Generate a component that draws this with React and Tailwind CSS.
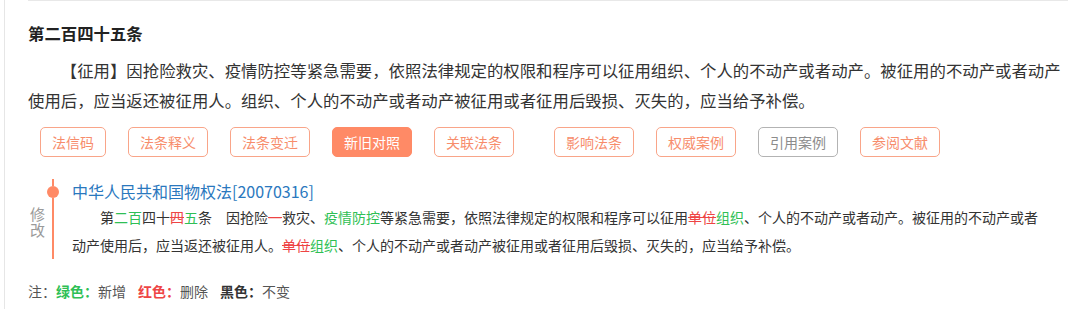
import React from 'react';

const font = { fontFamily: '"Noto Sans CJK SC", "Noto Sans", sans-serif' };

const tabs = [
  { label: '法信码' },
  { label: '法条释义' },
  { label: '法条变迁' },
  { label: '新旧对照', active: true },
  { label: '关联法条' },
  { label: '影响法条', wide: true },
  { label: '权威案例' },
  { label: '引用案例', muted: true },
  { label: '参阅文献' },
];

function Tab({ label, active, muted, wide }) {
  let cls = 'border-[#f9a589] text-[#f78d6c] bg-white';
  if (active) cls = 'border-[#ff8a66] bg-[#ff8a66] text-white';
  if (muted) cls = 'border-[#b3b3b3] text-[#8c8c8c] bg-white';
  return (
    <div
      className={`h-[30px] px-[11px] flex items-center border rounded-[5px] text-[14px] leading-none ${cls} ${
        wide ? 'ml-[18px]' : ''
      }`}
    >
      {label}
    </div>
  );
}

const G = ({ children }) => <span className="text-[#2fbf55]">{children}</span>;
const R = ({ children }) => (
  <span className="text-[#ee4444] line-through decoration-[#ee4444]">{children}</span>
);

export default function App() {
  return (
    <div className="bg-white w-[1080px] h-[309px] overflow-hidden text-[#333]" style={font}>
      <div className="ml-[4px] border-l border-[#e6e6e6] h-full pl-[23px] pr-[12px]">
        <div className="border-t border-[#e8e8e8] pt-[20px]">
          <h2 className="text-[16.4px] leading-[24px] font-bold text-[#222]">第二百四十五条</h2>
          <p className="mt-[10px] text-[16.4px] leading-[30px] indent-[2em] text-[#333]">
            【征用】因抢险救灾、疫情防控等紧急需要，依照法律规定的权限和程序可以征用组织、个人的不动产或者动产。被征用的不动产或者动产使用后，应当返还被征用人。组织、个人的不动产或者动产被征用或者征用后毁损、灭失的，应当给予补偿。
          </p>

          <div className="mt-[12px] pl-[12px] flex gap-[22px]">
            {tabs.map((t) => (
              <Tab key={t.label} {...t} />
            ))}
          </div>

          <div className="mt-[22px] flex">
            <div className="ml-[2px] w-[15px] self-center mt-[6px] text-[15px] leading-[16px] text-[#9a9a9a]">
              <div>修</div>
              <div>改</div>
            </div>
            <div className="ml-[2px] w-[12px] flex flex-col items-center">
              <div className="w-[2px] h-[7px] bg-[#ff8a66]" />
              <div className="w-[12px] h-[12px] rounded-full bg-[#ff8a66]" />
              <div className="w-[2px] flex-1 bg-[#ff8a66]" />
            </div>
            <div className="ml-[13px] w-[978px]">
              <div className="text-[16px] leading-[24px] text-[#2a78be]">中华人民共和国物权法[20070316]</div>
              <p className="text-[14px] leading-[28px] indent-[2em] text-[#333]">
                第<G>二百</G>四十<R>四</R><G>五</G>条　因抢险<R>一</R>救灾、<G>疫情防控</G>等紧急需要，依照法律规定的权限和程序可以征用<R>单位</R><G>组织</G>、个人的不动产或者动产。被征用的不动产或者动产使用后，应当返还被征用人。<R>单位</R><G>组织</G>、个人的不动产或者动产被征用或者征用后毁损、灭失的，应当给予补偿。
              </p>
            </div>
          </div>

          <div className="mt-[21px] text-[14px] leading-[22px] text-[#555] flex">
            <span>注：</span>
            <span className="font-bold text-[#2fbf55]">绿色：</span>
            <span>新增</span>
            <span className="ml-[12px] font-bold text-[#ee4444]">红色：</span>
            <span>删除</span>
            <span className="ml-[12px] font-bold text-[#333]">黑色：</span>
            <span>不变</span>
          </div>
        </div>
      </div>
    </div>
  );
}
